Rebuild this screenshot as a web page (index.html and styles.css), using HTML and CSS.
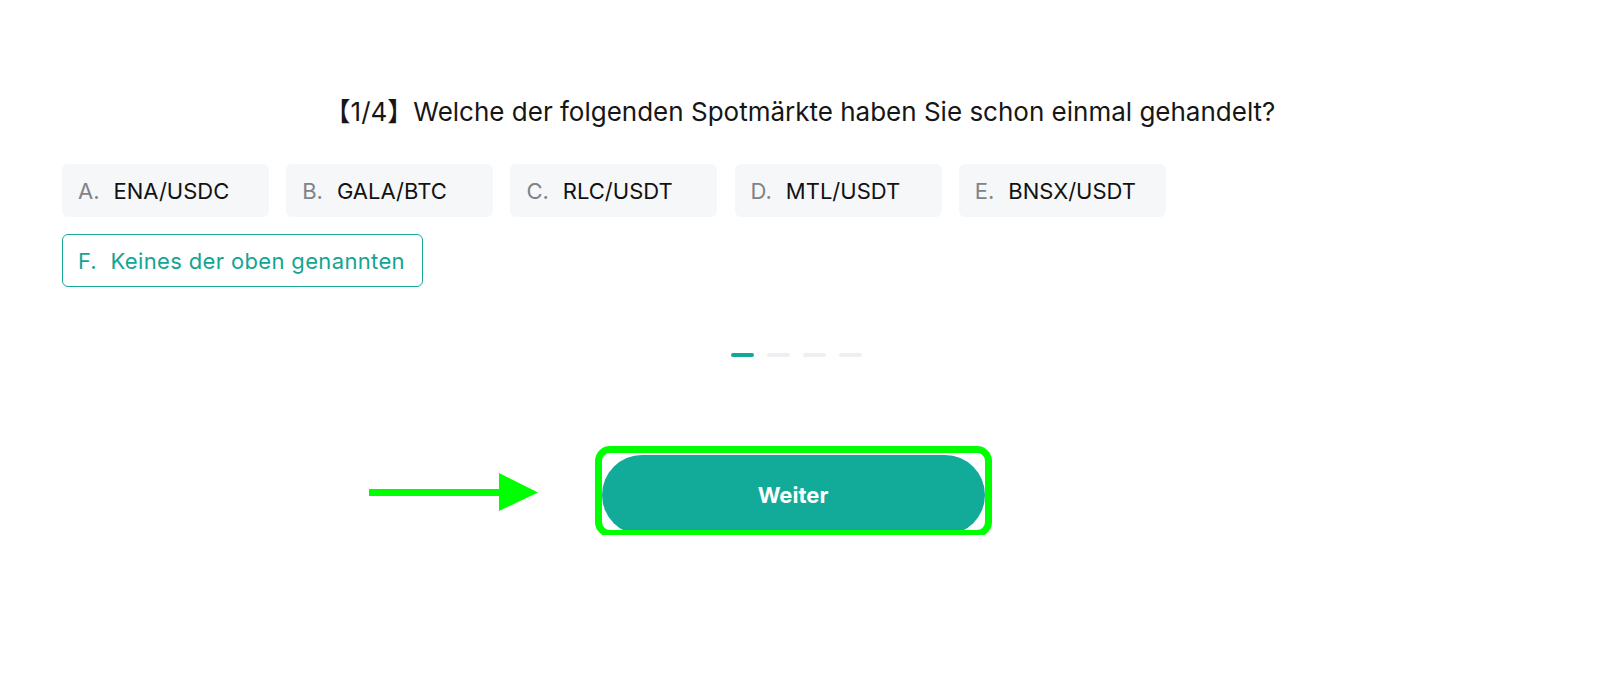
FILE: index.html
```html
<!DOCTYPE html>
<html lang="de">
<head>
<meta charset="utf-8">
<title>Quiz</title>
<link rel="stylesheet" href="styles.css">
</head>
<body>
<main class="quiz">
  <h1 class="question">【1/4】Welche der folgenden Spotmärkte haben Sie schon einmal gehandelt?</h1>
  <div class="options">
    <div class="option-row">
      <div class="option"><span class="label">A.</span><span class="text">ENA/USDC</span></div>
      <div class="option"><span class="label">B.</span><span class="text">GALA/BTC</span></div>
      <div class="option"><span class="label">C.</span><span class="text">RLC/USDT</span></div>
      <div class="option"><span class="label">D.</span><span class="text">MTL/USDT</span></div>
      <div class="option"><span class="label">E.</span><span class="text">BNSX/USDT</span></div>
    </div>
    <div class="option-row">
      <div class="option selected"><span class="label">F.</span><span class="text">Keines der oben genannten</span></div>
    </div>
  </div>
  <div class="dots">
    <span class="dot active"></span>
    <span class="dot"></span>
    <span class="dot"></span>
    <span class="dot"></span>
  </div>
  <div class="actions">
    <div class="btn-wrap">
      <button class="next">Weiter</button>
      <span class="highlight"></span>
      <svg class="arrow" width="172" height="40" viewBox="0 0 172 40" aria-hidden="true">
        <rect x="0" y="16" width="134" height="7" fill="#00ff00"/>
        <polygon points="130,0 169,19.5 130,38" fill="#00ff00"/>
      </svg>
    </div>
  </div>
</main>
</body>
</html>
```
FILE: styles.css
```css
html, body {
  margin: 0;
  padding: 0;
  background: #ffffff;
}

body {
  font-family: Inter, "Noto Sans", "Liberation Sans", "Noto Sans CJK SC", sans-serif;
  color: #121212;
}

.quiz {
  padding: 95px 62px 0 62px;
  display: flex;
  flex-direction: column;
}

.question {
  margin: 0;
  text-align: center;
  font-size: 26px;
  line-height: 34px;
  font-weight: 400;
  color: #161616;
}

.options {
  margin-top: 35px;
  display: flex;
  flex-direction: column;
  row-gap: 17px;
}

.option-row {
  display: flex;
  column-gap: 17.2px;
}

.option {
  box-sizing: border-box;
  min-width: 207px;
  height: 53px;
  padding: 0 17px 0 15px;
  display: flex;
  align-items: center;
  gap: 14px;
  background: #f6f7f9;
  border: 1px solid #f6f7f9;
  border-radius: 6px;
  font-size: 22px;
  font-weight: 400;
}

.option .label {
  color: #7f8389;
}

.option .text {
  color: #121212;
}

.option.selected {
  background: #ffffff;
  border-color: #19a999;
}

.option.selected .text {
  letter-spacing: 0.35px;
}

.option.selected .label,
.option.selected .text {
  color: #12a594;
}

.dots {
  margin-top: 66px;
  padding-right: 7px;
  display: flex;
  justify-content: center;
  gap: 13px;
}

.dot {
  width: 23px;
  height: 4px;
  border-radius: 2px;
  background: #eeeff2;
}

.dot.active {
  background: #13a999;
}

.actions {
  margin-top: 98px;
  padding-right: 14px;
  display: flex;
  justify-content: center;
}

.btn-wrap {
  position: relative;
}

.next {
  display: block;
  width: 383px;
  height: 80px;
  border: none;
  border-radius: 40px;
  background: #12aa98;
  color: #ffffff;
  font-family: Inter, "Noto Sans", "Liberation Sans", sans-serif;
  font-size: 22px;
  font-weight: 700;
  cursor: pointer;
}

.highlight {
  position: absolute;
  left: -7px;
  top: -9px;
  width: 397px;
  height: 91px;
  box-sizing: border-box;
  border: 7px solid #00ff00;
  border-radius: 15px;
}

.arrow {
  position: absolute;
  left: -233px;
  top: 18px;
}
```
